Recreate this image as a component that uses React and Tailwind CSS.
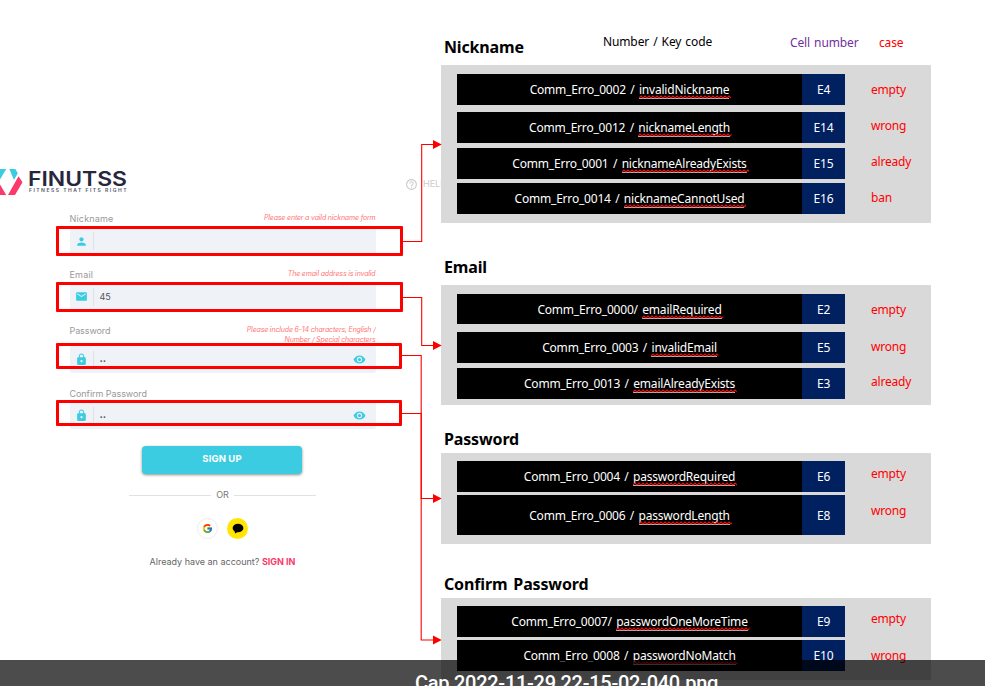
import React from "react";
import { MdPerson, MdEmail, MdLock, MdVisibility, MdHelpOutline } from "react-icons/md";
import { FcGoogle } from "react-icons/fc";

function Squiggle() {
  return (
    <svg className="absolute left-0 top-[13px] h-[4px] w-[calc(100%+2px)]" aria-hidden="true">
      <defs>
        <pattern id="zig" width="4" height="4" patternUnits="userSpaceOnUse">
          <path d="M0 3 L2 1 L4 3" fill="none" stroke="#f01010" strokeWidth="1.2" />
        </pattern>
      </defs>
      <rect width="100%" height="4" fill="url(#zig)" />
    </svg>
  );
}

function Row({ code, name, cell, size, gap = "" }) {
  return (
    <div className={`flex w-[388px] shrink-0 text-[12px] tracking-[-0.2px] text-white ${size} ${gap}`}>
      <div className="flex w-[345px] items-center justify-center whitespace-pre bg-black [word-spacing:1.5px]">
        <span>{code} </span>
        <span className="relative leading-[16px]">
          <span className="border-b border-white/70 leading-[12px]">{name}</span>
          <Squiggle />
        </span>
      </div>
      <div className="flex flex-1 items-center justify-center bg-[#002060]">{cell}</div>
    </div>
  );
}

function Section({ title, header, height, rows, cases, casesTop, titleTop = "" }) {
  return (
    <section>
      <div className={`flex h-[36px] items-center pl-[3px] ${titleTop}`}>
        <h2 className="whitespace-nowrap text-[16px] font-bold leading-[24px] tracking-[-0.15px] [word-spacing:2px]">{title}</h2>
        {header}
      </div>
      <div className={`flex w-[490px] bg-[#d9d9d9] pl-4 ${height}`}>
        <div className="flex flex-col">{rows}</div>
        <div className={`flex flex-col pl-[26px] text-[12px] leading-[36px] tracking-[-0.2px] text-[#ff0000] ${casesTop}`}>{cases}</div>
      </div>
    </section>
  );
}

function Field({ icon: Icon, value, dots, eye }) {
  return (
    <div className="flex h-[27px] w-[306px] items-center rounded-[2px] bg-[#eff3f8] text-[9px] text-[#555]">
      <Icon className="ml-[5px] size-[13px] shrink-0 text-[#3bcce1]" />
      <span className="ml-[5px] h-[18px] w-px bg-[#dde1e6]" />
      <span className="ml-[6px] flex-1">
        {dots ? <span className="block pb-[4px] text-[10px] font-bold leading-[12px]">{value}</span> : value}
      </span>
      {eye && <MdVisibility className="mr-[10px] size-[13px] text-[#3bcce1]" />}
    </div>
  );
}

function Label({ text, error, size, tracking = "tracking-[0.18px]" }) {
  return (
    <div className={`flex w-[306px] justify-between pt-[0.5px] ${size}`}>
      <span className={`text-[9px] leading-[12px] text-[#999] ${tracking}`}>{text}</span>
      <span className="whitespace-pre text-right text-[7px] italic leading-[10px] tracking-[-0.16px] text-[#ff7575]">{error}</span>
    </div>
  );
}

function Logo() {
  return (
    <svg className="block h-[30px] w-[130px] shrink-0" viewBox="0 0 130 30" aria-label="Finutss">
      <path d="M0 2h6.2L0 12.4zM9.3 2h6L17.8 6.2 14 13z" fill="#3bcce1" />
      <path d="M18.5 9.3 22.5 15.3 15 28H8zM0 17.5 6.2 28H0z" fill="#fb3a6b" />
      <text x="28" y="18.5" textLength="99" lengthAdjust="spacingAndGlyphs" fontSize="19.5" fontWeight="600" fill="#26263d" className="font-['Inter',sans-serif]">FINUTSS</text>
      <text x="29" y="25.3" textLength="97.5" fontSize="5" fontWeight="600" fill="#55556a" className="font-['Inter',sans-serif]">FITNESS THAT FITS RIGHT</text>
    </svg>
  );
}

function Arrows() {
  return (
    <svg className="absolute left-0 top-0 h-[686px] w-[450px]" viewBox="0 0 450 686" aria-hidden="true">
      <g fill="none" stroke="#ff0000" strokeWidth="1.1">
        <path d="M403 241.5H421.7V144.5H434" />
        <path d="M403 297.5H421.7V345.5H434" />
        <path d="M402 355.5H421.2V498.5H434" />
        <path d="M402 413.5H421.2V640H434" />
      </g>
      <g fill="#ff0000">
        <path d="M433 140v9l8.7-4.5zM433 341v9l8.7-4.5zM433 494v9l8.7-4.5zM433 635.5v9l8.7-4.5z" />
      </g>
    </svg>
  );
}

export default function App() {
  return (
    <main className="relative flex h-[686px] w-[985px] overflow-hidden bg-white font-['Noto_Sans',sans-serif] text-black">
      <div className="w-[441px] shrink-0 overflow-hidden font-['Inter',sans-serif]">
        <div className="flex pt-[167px]">
          <Logo />
          <div className="ml-[275px] mt-[11px] flex h-[12px] shrink-0 items-center gap-[5px] whitespace-nowrap text-[9px] text-[#ccc]">
            <MdHelpOutline className="size-[13px] shrink-0" />
            HELP
          </div>
        </div>
        <div className="pl-[69.5px] pt-[15px]">
          <Label text="Nickname" error="Please enter a vaild nickname form" size="h-[15.5px]" />
          <Field icon={MdPerson} />
          <Label text="Email" error="The email address is invalid" size="mt-[13.5px] h-[15px]" />
          <Field icon={MdEmail} value="45" />
          <Label text="Password" error={"Please include 6-14 characters, English /\nNumber / Special characters"} size="mt-[14px] h-[22px]" tracking="tracking-[-0.1px]" />
          <Field icon={MdLock} value=".." dots eye />
          <Label text="Confirm Password" size="mt-[14px] h-[15px]" tracking="tracking-[-0.06px]" />
          <Field icon={MdLock} value=".." dots eye />
        </div>
        <div className="ml-[129px] mt-[16.5px] flex w-[187px] flex-col items-center">
          <button className="mr-[1px] h-[28px] w-[160px] rounded-[4px] bg-[#3bcce1] text-[9.5px] font-bold tracking-[0.1px] text-white shadow-[0_1px_3px_rgba(0,0,0,0.45)]">SIGN UP</button>
          <div className="mt-[14.5px] flex h-[14px] w-full items-center gap-[5px] text-[9px] text-[#777]">
            <span className="h-px flex-1 bg-[#e2e2e2]" />
            OR
            <span className="h-px flex-1 bg-[#e2e2e2]" />
          </div>
          <div className="mt-[16px] flex gap-[9px]">
            <span className="flex size-[21px] items-center justify-center rounded-full border border-[#ececec]">
              <FcGoogle className="size-[11px]" />
            </span>
            <span className="flex size-[21px] items-center justify-center rounded-full bg-[#ffe500]">
              <svg viewBox="0 0 12 11" className="h-[11px] w-[12px]">
                <ellipse cx="6" cy="5" rx="5.4" ry="4.3" />
                <path d="M2.5 7 3 10.5 6.5 8.5z" />
              </svg>
            </span>
          </div>
          <p className="mt-[15.5px] whitespace-nowrap text-[9px] leading-[14px] text-[#666]">
            Already have an account? <b className="text-[#fb3a6b]">SIGN IN</b>
          </p>
        </div>
      </div>

      <div className="w-[490px] shrink-0 pt-[29px]">
        <Section
          title="Nickname"
          height="h-[158px]"
          header={
            <div className="flex h-[36px] whitespace-nowrap text-[12px] leading-[16px] tracking-[-0.1px] [word-spacing:1px]">
              <span className="ml-[79px] w-[187px] pt-[5px]">Number / Key code</span>
              <span className="w-[89px] pt-[6px] text-[#7030a0]">Cell number</span>
              <span className="pt-[6px] text-[#ff0000]">case</span>
            </div>
          }
          rows={
            <>
              <Row code="Comm_Erro_0002 /" name="invalidNickname" cell="E4" size="h-[31px]" gap="mt-[9px]" />
              <Row code="Comm_Erro_0012 /" name="nicknameLength" cell="E14" size="h-[31px]" gap="mt-[7px]" />
              <Row code="Comm_Erro_0001 /" name="nicknameAlreadyExists" cell="E15" size="h-[31px]" gap="mt-[5px]" />
              <Row code="Comm_Erro_0014 /" name="nicknameCannotUsed" cell="E16" size="h-[31px]" gap="mt-[4px]" />
            </>
          }
          casesTop="pt-[7px]"
          cases={<><span>empty</span><span>wrong</span><span>already</span><span>ban</span></>}
        />
        <div className="h-[26px]" />
        <Section
          title="Email"
          height="h-[120px]"
          rows={
            <>
              <Row code="Comm_Erro_0000/" name="emailRequired" cell="E2" size="h-[30px] leading-[20px] *:pt-px" gap="mt-[9px]" />
              <Row code="Comm_Erro_0003 /" name="invalidEmail" cell="E5" size="h-[31px]" gap="mt-[8px]" />
              <Row code="Comm_Erro_0013 /" name="emailAlreadyExists" cell="E3" size="h-[31px]" gap="mt-[5px]" />
            </>
          }
          casesTop="pt-[7px]"
          cases={<><span>empty</span><span className="mt-px">wrong</span><span className="-mt-px">already</span></>}
        />
        <div className="h-[12px]" />
        <Section
          title="Password"
          titleTop="pt-[8px]"
          height="h-[91px]"
          rows={
            <>
              <Row code="Comm_Erro_0004 /" name="passwordRequired" cell="E6" size="h-[31px]" gap="mt-[8px]" />
              <Row code="Comm_Erro_0006 /" name="passwordLength" cell="E8" size="h-[40px] *:pt-[2px]" gap="mt-[3px]" />
            </>
          }
          casesTop="pt-[3px]"
          cases={<><span>empty</span><span className="mt-px">wrong</span></>}
        />
        <div className="h-[18px]" />
        <Section
          title="Confirm Password"
          titleTop="pt-[8px]"
          height="h-[82px]"
          rows={
            <>
              <Row code="Comm_Erro_0007/" name="passwordOneMoreTime" cell="E9" size="h-[31px]" gap="mt-[8px]" />
              <Row code="Comm_Erro_0008 /" name="passwordNoMatch" cell="E10" size="h-[31px]" gap="mt-[3px]" />
            </>
          }
          casesTop="pt-[3px]"
          cases={<><span>empty</span><span className="mt-px">wrong</span></>}
        />
      </div>

      <div className="absolute left-[56px] top-[226px] h-[30px] w-[347px] rounded-[1px] border-[3px] border-[#ff0000]" />
      <div className="absolute left-[56px] top-[282px] h-[30px] w-[347px] rounded-[1px] border-[3px] border-[#ff0000]" />
      <div className="absolute left-[56px] top-[343px] h-[26px] w-[346px] rounded-[1px] border-[3px] border-[#ff0000]" />
      <div className="absolute left-[56px] top-[400px] h-[26px] w-[346px] rounded-[1px] border-[3px] border-[#ff0000]" />
      <Arrows />

      <div className="absolute inset-x-0 top-[660px] h-[26px] overflow-hidden bg-black/70">
        <p className="whitespace-nowrap pl-[415px] pt-[11px] font-['Roboto',sans-serif] text-[20px] font-medium leading-[24px] tracking-[-0.27px] text-white">Cap 2022-11-29 22-15-02-040.png</p>
      </div>
    </main>
  );
}
